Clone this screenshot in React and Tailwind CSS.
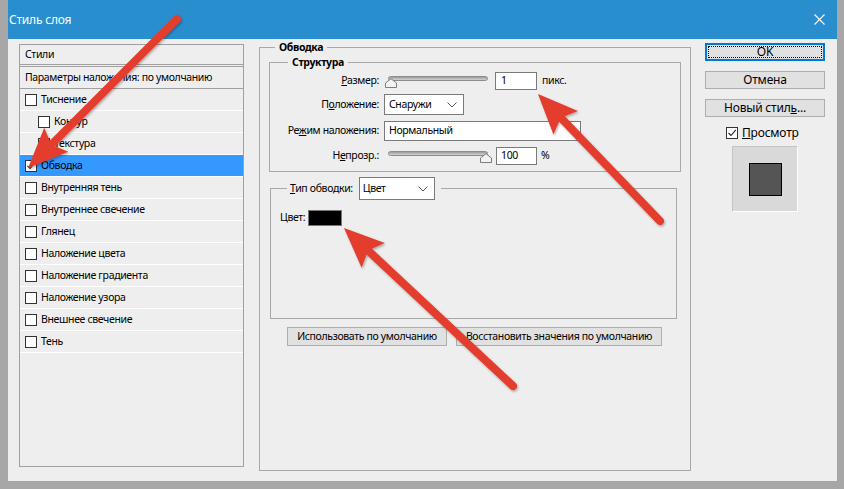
import React from 'react';

const styleItems = [
  { label: 'Тиснение' },
  { label: 'Контур', indent: true },
  { label: 'Текстура', indent: true },
  { label: 'Обводка', checked: true, active: true },
  { label: 'Внутренняя тень' },
  { label: 'Внутреннее свечение' },
  { label: 'Глянец' },
  { label: 'Наложение цвета' },
  { label: 'Наложение градиента' },
  { label: 'Наложение узора' },
  { label: 'Внешнее свечение' },
  { label: 'Тень' },
];

function CheckBox({ checked }) {
  return (
    <span className="w-[12px] h-[12px] shrink-0 border border-[#333333] bg-white flex items-center justify-center">
      {checked && (
        <svg width="10" height="10" viewBox="0 0 10 10">
          <path d="M1.5 5 L4 7.5 L8.8 1.8" fill="none" stroke="#222" strokeWidth="1.1" />
        </svg>
      )}
    </span>
  );
}

function Slider({ thumbRight }) {
  return (
    <div className="relative w-[100px] h-[18px]">
      <div className="absolute left-0 right-0 top-[4px] h-[5px] rounded-full border border-[#8c8c8c] bg-gradient-to-b from-[#9c9c9c] to-[#d4d4d4]" />
      <svg
        className={thumbRight ? 'absolute top-[6px] right-[-4px]' : 'absolute top-[6px] left-[-3px]'}
        width="12"
        height="10"
        viewBox="0 0 12 10"
      >
        <path d="M0.5 9.5 V5 L6 0.7 L11.5 5 V9.5 Z" fill="#f2f2f2" stroke="#7c7c7c" />
      </svg>
    </div>
  );
}

function Chevron() {
  return (
    <svg width="10" height="6" viewBox="0 0 10 6">
      <path d="M0.5 0.5 L5 5 L9.5 0.5" fill="none" stroke="#555" strokeWidth="1" />
    </svg>
  );
}

function Arrow({ x1, y1, x2, y2 }) {
  const dx = x2 - x1;
  const dy = y2 - y1;
  const len = Math.hypot(dx, dy);
  const ux = dx / len;
  const uy = dy / len;
  const nx = -uy;
  const ny = ux;
  const L = 40;
  const W = 17;
  const bx = x2 - ux * L;
  const by = y2 - uy * L;
  const pts = `${x2},${y2} ${bx + nx * W},${by + ny * W} ${bx + ux * 7},${by + uy * 7} ${bx - nx * W},${by - ny * W}`;
  return (
    <g>
      <line x1={x1} y1={y1} x2={bx + ux * 6} y2={by + uy * 6} stroke="#e33d2f" strokeWidth="8" strokeLinecap="round" />
      <polygon points={pts} fill="#e33d2f" />
    </g>
  );
}

export default function App() {
  return (
    <div className="relative w-[844px] h-[489px] bg-[#a7a7a7] overflow-hidden font-['Noto_Sans',sans-serif] text-[10.5px] tracking-[-0.35px] text-black">
      <div className="ml-[7px] w-[831px] h-[482px] flex flex-col border-l border-r border-b border-[#6fb5e6] bg-[#eeeeee]">
        {/* заголовок окна */}
        <div className="h-[39px] shrink-0 bg-[#298ece] flex items-center justify-between pl-[1px] pr-[12px]">
          <span className="text-white text-[12px] tracking-[-0.2px]">Стиль слоя</span>
          <svg width="11" height="11" viewBox="0 0 11 11">
            <path d="M0.5 0.5 L10.5 10.5 M10.5 0.5 L0.5 10.5" stroke="#fff" strokeWidth="1.1" />
          </svg>
        </div>

        <div className="flex items-start">
          {/* список стилей */}
          <div className="ml-[11px] mt-[5px] w-[225px] h-[423px] border border-[#a0a0a0] flex flex-col">
            <div className="h-[20px] border-b border-[#a0a0a0] flex items-center pl-[5px]">Стили</div>
            <div className="mt-[1px] h-[23px] border-t border-b border-[#a0a0a0] flex items-center pl-[5px]">
              Параметры наложения: по умолчанию
            </div>
            {styleItems.map(item => (
              <div
                key={item.label}
                className={`h-[22px] border-b border-white flex items-center gap-[4px] ${item.indent ? 'pl-[18px]' : 'pl-[5px]'} ${item.active ? 'bg-[#3399ff]' : ''}`}
              >
                <CheckBox checked={item.checked} />
                <span>{item.label}</span>
              </div>
            ))}
          </div>

          {/* Обводка */}
          <div className="ml-[15px] mt-[1px] w-[432px] h-[431px] flex flex-col">
            <div className="h-[14px] flex">
              <div className="w-[16px] shrink-0 mt-[7px] border-t border-l border-[#a8a8a8]" />
              <span className="px-[4px] font-bold leading-[14px]">Обводка</span>
              <div className="flex-1 mt-[7px] border-t border-r border-[#a8a8a8]" />
            </div>
            <div className="flex-1 border-l border-r border-b border-[#a8a8a8] flex flex-col">
              {/* Структура */}
              <div className="ml-[9px] mt-[1px] w-[412px] flex flex-col">
                <div className="h-[14px] flex">
                  <div className="w-[19px] shrink-0 mt-[7px] border-t border-l border-[#a8a8a8]" />
                  <span className="px-[4px] font-bold leading-[14px]">Структура</span>
                  <div className="flex-1 mt-[7px] border-t border-r border-[#a8a8a8]" />
                </div>
                <div className="border-l border-r border-b border-[#a8a8a8] pb-[6px]">
                  <div className="mt-[3px] h-[18px] flex items-center">
                    <span className="w-[109px] text-right">
                      <span className="underline">Р</span>азмер:
                    </span>
                    <div className="ml-[9px]">
                      <Slider />
                    </div>
                    <div className="ml-[7px] w-[42px] h-[18px] border border-[#7a7a7a] bg-white flex items-center pl-[5px]">1</div>
                    <span className="ml-[5px]">пикс.</span>
                  </div>

                  <div className="mt-[4px] h-[21px] flex items-center">
                    <span className="w-[109px] text-right">
                      П<span className="underline">о</span>ложение:
                    </span>
                    <div className="ml-[5px] w-[80px] h-[21px] border border-[#7a7a7a] bg-white flex items-center justify-between pl-[4px] pr-[6px]">
                      <span>Снаружи</span>
                      <Chevron />
                    </div>
                  </div>

                  <div className="mt-[6px] h-[20px] flex items-center">
                    <span className="w-[109px] text-right">
                      Ре<span className="underline">ж</span>им наложения:
                    </span>
                    <div className="ml-[5px] w-[197px] h-[20px] border border-[#7a7a7a] bg-white flex items-center pl-[4px]">Нормальный</div>
                  </div>

                  <div className="mt-[6px] h-[18px] flex items-center">
                    <span className="w-[109px] text-right">
                      Н<span className="underline">е</span>прозр.:
                    </span>
                    <div className="ml-[9px]">
                      <Slider thumbRight />
                    </div>
                    <div className="ml-[8px] w-[41px] h-[18px] border border-[#7a7a7a] bg-white flex items-center pl-[4px]">100</div>
                    <span className="ml-[4px]">%</span>
                  </div>
                </div>
              </div>

              {/* Тип обводки */}
              <div className="ml-[10px] mt-[5px] w-[407px] h-[142px] flex flex-col">
                <div className="h-[23px] flex">
                  <div className="w-[17px] shrink-0 mt-[11px] border-t border-l border-[#a8a8a8]" />
                  <div className="pl-[3px] pr-[6px] flex items-center gap-[6px]">
                    <span>
                      <span className="underline">Т</span>ип обводки:
                    </span>
                    <div className="w-[76px] h-[23px] border border-[#7a7a7a] bg-white flex items-center justify-between pl-[3px] pr-[6px]">
                      <span>Цвет</span>
                      <Chevron />
                    </div>
                  </div>
                  <div className="flex-1 mt-[11px] border-t border-r border-[#a8a8a8]" />
                </div>
                <div className="flex-1 border-l border-r border-b border-[#a8a8a8]">
                  <div className="mt-[10px] pl-[9px] flex items-center gap-[3px]">
                    <span>Цвет:</span>
                    <span className="w-[34px] h-[16px] bg-black border border-[#777]" />
                  </div>
                </div>
              </div>

              <div className="mt-[8px] ml-[27px] flex gap-[9px]">
                <button className="w-[160px] h-[19px] border border-[#adadad] bg-[#e1e1e1] leading-none whitespace-nowrap">Использовать по умолчанию</button>
                <button className="w-[206px] h-[19px] border border-[#adadad] bg-[#e1e1e1] leading-none whitespace-nowrap">Восстановить значения по умолчанию</button>
              </div>
            </div>
          </div>

          {/* кнопки справа */}
          <div className="ml-[14px] mt-[4px] w-[120px] flex flex-col text-[12px] tracking-[-0.2px]">
            <button className="h-[18px] border-2 border-[#0078d7] bg-[#e1e1e1] p-[1px]">
              <div className="h-full border border-dotted border-black flex items-center justify-center leading-none">OK</div>
            </button>
            <button className="mt-[10px] h-[18px] border border-[#adadad] bg-[#e1e1e1] leading-none">Отмена</button>
            <button className="mt-[10px] h-[18px] border border-[#adadad] bg-[#e1e1e1] leading-none">
              Новый стил<span className="underline">ь</span>...
            </button>
            <div className="mt-[7px] pl-[21px] flex items-center gap-[4px]">
              <CheckBox checked />
              <span>
                <span className="underline">П</span>росмотр
              </span>
            </div>
            <div className="mt-[4px] ml-[27px] w-[66px] h-[66px] bg-[#d9d9d9] border border-[#c4c4c4] border-r-white border-b-white flex items-center justify-center">
              <div className="w-[33px] h-[33px] bg-[#555555] border border-black" />
            </div>
          </div>
        </div>
      </div>

      {/* стрелки */}
      <svg className="absolute inset-0 pointer-events-none" width="844" height="489" viewBox="0 0 844 489">
        <defs>
          <filter id="sh" x="-10%" y="-10%" width="120%" height="120%">
            <feDropShadow dx="1" dy="1.5" stdDeviation="1.2" floodColor="#000" floodOpacity="0.3" />
          </filter>
        </defs>
        <g filter="url(#sh)">
          <Arrow x1={177} y1={19} x2={28} y2={168} />
          <Arrow x1={660} y1={221} x2={538} y2={94} />
          <Arrow x1={513} y1={386} x2={344} y2={228} />
        </g>
      </svg>
    </div>
  );
}
